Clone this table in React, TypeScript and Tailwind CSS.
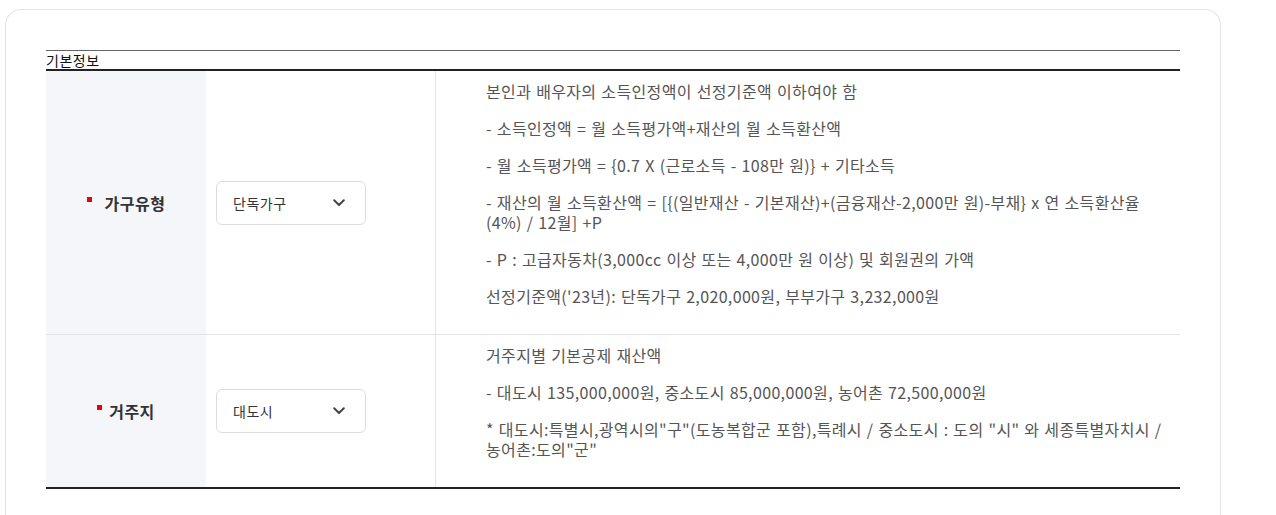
import React from "react";

const font = { fontFamily: '"Noto Sans CJK KR", "Noto Sans", sans-serif' };

function Chevron() {
  return (
    <svg width="12" height="8" viewBox="0 0 12 8" className="shrink-0">
      <path d="M1.2 1.2 L6 6 L10.8 1.2" fill="none" stroke="#444" strokeWidth="2" strokeLinecap="round" strokeLinejoin="round" />
    </svg>
  );
}

function Select({ value }: { value: string }) {
  return (
    <div className="flex h-[44px] w-[150px] items-center justify-between rounded-[6px] border border-[#dddddd] bg-white pl-[16px] pr-[20px]">
      <span className="text-[14px] leading-none tracking-[0.5px] text-[#333333]">{value}</span>
      <Chevron />
    </div>
  );
}

function Row({
  label,
  gap,
  value,
  lines,
  last,
}: {
  label: string;
  gap: string;
  value: string;
  lines: React.ReactNode[];
  last?: boolean;
}) {
  return (
    <div className={`flex ${last ? "border-b-2 border-[#222222]" : "border-b border-[#e3e3e3]"}`}>
      <div className="flex w-[160px] shrink-0 items-center justify-center bg-[#f5f6fa]">
        <span className="mb-[7px] h-[5px] w-[5px] shrink-0 bg-[#e60012]" />
        <span className={`${gap} text-[16px] font-bold leading-none tracking-[0.5px] text-[#333333]`}>{label}</span>
      </div>
      <div className="flex w-[230px] shrink-0 items-center border-r border-[#e3e3e3] pl-[10px]">
        <Select value={value} />
      </div>
      <div className="flex-1 pb-[11px] pl-[50px] pr-[10px] pt-[10px] text-[16px] leading-[20px] tracking-[0.35px] text-[#555555] [word-spacing:1px]">
        {lines.map((l, i) => (
          <p key={i} className="mb-[17px] whitespace-nowrap">
            {l}
          </p>
        ))}
      </div>
    </div>
  );
}

export default function App() {
  return (
    <div className="min-h-[515px] bg-white pl-[5px] pt-[9px]" style={font}>
      <div className="w-[1216px] rounded-t-[16px] border border-b-0 border-[#e3e3e3] px-[40px] pt-[40px] pb-[40px]">
        <div className="border-t border-[#666666]">
          <div className="h-[18px] text-[14px] leading-[18px] tracking-[0.5px] text-[#111111]">기본정보</div>
        </div>
        <div className="border-t-2 border-[#222222]">
          <Row
            label="가구유형"
            gap="ml-[13px]"
            value="단독가구"
            lines={[
              "본인과 배우자의 소득인정액이 선정기준액 이하여야 함",
              "- 소득인정액 = 월 소득평가액+재산의 월 소득환산액",
              "- 월 소득평가액 = {0.7 X (근로소득 - 108만 원)} + 기타소득",
              <>
                - 재산의 월 소득환산액 = [{"{"}(일반재산 - 기본재산)+(금융재산-2,000만 원)-부채{"}"} x 연 소득환산율
                <br />
                (4%) / 12월] +P
              </>,
              "- P : 고급자동차(3,000cc 이상 또는 4,000만 원 이상) 및 회원권의 가액",
              "선정기준액('23년): 단독가구 2,020,000원, 부부가구 3,232,000원",
            ]}
          />
          <Row
            label="거주지"
            gap="ml-[7px]"
            value="대도시"
            last
            lines={[
              "거주지별 기본공제 재산액",
              "- 대도시 135,000,000원, 중소도시 85,000,000원, 농어촌 72,500,000원",
              <>
                * 대도시:특별시,광역시의"구"(도농복합군 포함),특례시 / 중소도시 : 도의 "시" 와 세종특별자치시 /
                <br />
                농어촌:도의"군"
              </>,
            ]}
          />
        </div>
      </div>
    </div>
  );
}
